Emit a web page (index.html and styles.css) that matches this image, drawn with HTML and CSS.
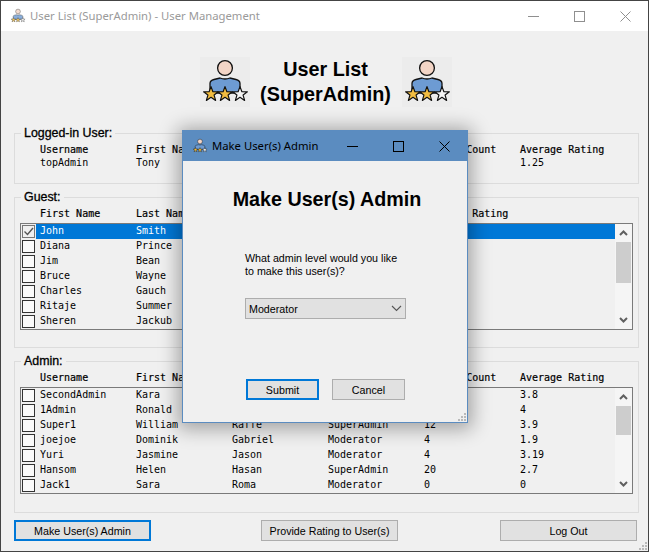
FILE: index.html
```html
<!DOCTYPE html>
<html lang="en">
<head>
<meta charset="utf-8">
<title>User List (SuperAdmin) - User Management</title>
<link rel="stylesheet" href="styles.css">
</head>
<body>
<svg class="defs" width="0" height="0" aria-hidden="true">
  <defs>
    <symbol id="star" viewBox="-8 -8 16 16">
      <polygon points="0,-7.4 1.9,-2.3 7.4,-2.2 3.1,1.1 4.6,6.4 0,3.3 -4.6,6.4 -3.1,1.1 -7.4,-2.2 -1.9,-2.3" stroke="#111" stroke-width="1.2" stroke-linejoin="round"/>
    </symbol>
    <symbol id="user" viewBox="0 0 50 50">
      <circle cx="25" cy="11" r="7.4" fill="#f3d5c6" stroke="#111" stroke-width="1.3"/>
      <path d="M10 36V26.5Q10 23.5 14 22.5L20 21Q25 23 30 21L36 22.5Q40 23.5 40 26.5V36Z" fill="#6d9bd3" stroke="#111" stroke-width="1.3"/>
      <use href="#star" x="3" y="29" width="16" height="16" fill="#f2bd41"/>
      <use href="#star" x="17" y="29" width="16" height="16" fill="#f2bd41"/>
      <use href="#star" x="32" y="29" width="16" height="16" fill="#f4f4f4"/>
    </symbol>
    <symbol id="chev-up" viewBox="0 0 9 6"><path d="M1 5L4.5 1.5L8 5" fill="none" stroke="#606060" stroke-width="2"/></symbol>
    <symbol id="chev-down" viewBox="0 0 9 6"><path d="M1 1L4.5 4.5L8 1" fill="none" stroke="#606060" stroke-width="2"/></symbol>
    <symbol id="grip" viewBox="0 0 9 9"><path d="M6 0h2v2H6zM3 3h2v2H3zM6 3h2v2H6zM0 6h2v2H0zM3 6h2v2H3zM6 6h2v2H6z" fill="#b9b9b9"/></symbol>
  </defs>
</svg>

<div class="window">
  <header class="titlebar">
    <svg class="title-icon title-icon-inactive"><use href="#user"/></svg>
    <span class="title-text">User List (SuperAdmin) - User Management</span>
    <div class="caption caption-inactive">
      <span class="cap-btn"><svg width="11" height="11" viewBox="0 0 11 11"><path d="M0 5.5H11" stroke="currentColor"/></svg></span>
      <span class="cap-btn"><svg width="11" height="11" viewBox="0 0 11 11"><rect x=".5" y=".5" width="10" height="10" fill="none" stroke="currentColor"/></svg></span>
      <span class="cap-btn"><svg width="11" height="11" viewBox="0 0 11 11"><path d="M.5 .5L10.5 10.5M10.5 .5L.5 10.5" stroke="currentColor"/></svg></span>
    </div>
  </header>

  <main class="content">
    <section class="hero">
      <svg class="hero-icon"><use href="#user"/></svg>
      <h1 class="hero-title">User List (SuperAdmin)</h1>
      <svg class="hero-icon"><use href="#user"/></svg>
    </section>

    <fieldset class="group group-logged">
      <legend>Logged-in User:</legend>
      <div class="cols head indent"><span>Username</span><span>First Name</span><span>Last Name</span><span>Admin Level</span><span>Rating Count</span><span>Average Rating</span></div>
      <div class="cols data indent"><span>topAdmin</span><span>Tony</span><span>Stark</span><span>SuperAdmin</span><span>8</span><span>1.25</span></div>
    </fieldset>

    <fieldset class="group group-list group-guest">
      <legend>Guest:</legend>
      <div class="cols head indent"><span>First Name</span><span>Last Name</span><span>Email</span><span>Username</span><span>Average Rating</span></div>
      <div class="listbox">
        <div class="rows">
          <div class="row selected"><span class="check checked"><svg width="11" height="11" viewBox="0 0 11 11"><path d="M1.5 5.5L4.5 8.5L10 2" fill="none" stroke="#555" stroke-width="1.4"/></svg></span><div class="cols cells"><span>John</span><span>Smith</span></div></div>
          <div class="row"><span class="check"></span><div class="cols cells"><span>Diana</span><span>Prince</span></div></div>
          <div class="row"><span class="check"></span><div class="cols cells"><span>Jim</span><span>Bean</span></div></div>
          <div class="row"><span class="check"></span><div class="cols cells"><span>Bruce</span><span>Wayne</span></div></div>
          <div class="row"><span class="check"></span><div class="cols cells"><span>Charles</span><span>Gauch</span></div></div>
          <div class="row"><span class="check"></span><div class="cols cells"><span>Ritaje</span><span>Summer</span></div></div>
          <div class="row"><span class="check"></span><div class="cols cells"><span>Sheren</span><span>Jackub</span></div></div>
        </div>
        <div class="scrollbar">
          <svg class="chev"><use href="#chev-up"/></svg>
          <div class="track"><div class="thumb thumb-guest"></div></div>
          <svg class="chev"><use href="#chev-down"/></svg>
        </div>
      </div>
    </fieldset>

    <fieldset class="group group-list">
      <legend>Admin:</legend>
      <div class="cols head indent"><span>Username</span><span>First Name</span><span>Last Name</span><span>Admin Level</span><span>Rating Count</span><span>Average Rating</span></div>
      <div class="listbox">
        <div class="rows">
          <div class="row"><span class="check"></span><div class="cols cells"><span>SecondAdmin</span><span>Kara</span><span>Danvers</span><span>Moderator</span><span>5</span><span>3.8</span></div></div>
          <div class="row"><span class="check"></span><div class="cols cells"><span>1Admin</span><span>Ronald</span><span>Reed</span><span>Moderator</span><span>1</span><span>4</span></div></div>
          <div class="row"><span class="check"></span><div class="cols cells"><span>Super1</span><span>William</span><span>Raffe</span><span>SuperAdmin</span><span>12</span><span>3.9</span></div></div>
          <div class="row"><span class="check"></span><div class="cols cells"><span>joejoe</span><span>Dominik</span><span>Gabriel</span><span>Moderator</span><span>4</span><span>1.9</span></div></div>
          <div class="row"><span class="check"></span><div class="cols cells"><span>Yuri</span><span>Jasmine</span><span>Jason</span><span>Moderator</span><span>4</span><span>3.19</span></div></div>
          <div class="row"><span class="check"></span><div class="cols cells"><span>Hansom</span><span>Helen</span><span>Hasan</span><span>SuperAdmin</span><span>20</span><span>2.7</span></div></div>
          <div class="row"><span class="check"></span><div class="cols cells"><span>Jack1</span><span>Sara</span><span>Roma</span><span>Moderator</span><span>0</span><span>0</span></div></div>
        </div>
        <div class="scrollbar">
          <svg class="chev"><use href="#chev-up"/></svg>
          <div class="track"><div class="thumb thumb-admin"></div></div>
          <svg class="chev"><use href="#chev-down"/></svg>
        </div>
      </div>
    </fieldset>

    <div class="actions">
      <button class="btn btn-main btn-focus" type="button">Make User(s) Admin</button>
      <button class="btn btn-main" type="button">Provide Rating to User(s)</button>
      <button class="btn btn-main" type="button">Log Out</button>
    </div>
  </main>
  <svg class="grip"><use href="#grip"/></svg>
</div>

<div class="dialog" role="dialog">
  <header class="dialog-bar">
    <svg class="title-icon"><use href="#user"/></svg>
    <span class="dialog-title">Make User(s) Admin</span>
    <div class="caption">
      <span class="cap-btn"><svg width="11" height="11" viewBox="0 0 11 11"><path d="M0 5.5H11" stroke="currentColor"/></svg></span>
      <span class="cap-btn"><svg width="11" height="11" viewBox="0 0 11 11"><rect x=".5" y=".5" width="10" height="10" fill="none" stroke="currentColor"/></svg></span>
      <span class="cap-btn"><svg width="11" height="11" viewBox="0 0 11 11"><path d="M.5 .5L10.5 10.5M10.5 .5L.5 10.5" stroke="currentColor"/></svg></span>
    </div>
  </header>
  <div class="dialog-body">
    <h2 class="dialog-heading">Make User(s) Admin</h2>
    <p class="dialog-text">What admin level would you like<br>to make this user(s)?</p>
    <div class="select"><span>Moderator</span><svg class="select-chev" width="11" height="7" viewBox="0 0 11 7"><path d="M1 1L5.5 5.5L10 1" fill="none" stroke="#555" stroke-width="1.1"/></svg></div>
    <div class="dialog-actions">
      <button class="btn btn-dialog btn-focus" type="button">Submit</button>
      <button class="btn btn-dialog" type="button">Cancel</button>
    </div>
  </div>
  <svg class="grip"><use href="#grip"/></svg>
</div>
</body>
</html>
```

FILE: styles.css
```css
* { box-sizing: border-box; }
html, body { margin: 0; padding: 0; }
body {
  width: 649px;
  height: 552px;
  overflow: hidden;
  position: relative;
  background: #444;
  font-family: "Liberation Sans", Arial, sans-serif;
  color: #000;
}
.defs { position: absolute; }

.window {
  position: relative;
  width: 647px;
  height: 550px;
  margin-left: 1px;
  margin-top: 1px;
  background: #f0f0f0;
  display: flex;
  flex-direction: column;
}

.titlebar {
  height: 30px;
  flex: none;
  background: #fff;
  display: flex;
  align-items: center;
  padding-left: 9px;
}
.title-icon { width: 16px; height: 16px; flex: none; }
.title-icon-inactive { opacity: 0.8; }
.title-text {
  margin-left: 4px;
  font: 11.3px/16px "Noto Sans", "Open Sans", sans-serif;
  color: #9a9a9a;
  flex: 1;
}
.caption { display: flex; flex: none; color: #000; }
.caption-inactive { color: #8f8f8f; }
.cap-btn {
  width: 46px;
  height: 30px;
  display: flex;
  align-items: center;
  justify-content: center;
}

.content {
  flex: 1;
  display: flex;
  flex-direction: column;
  padding: 0 9px 0 13px;
}

.hero {
  height: 95px;
  flex: none;
  display: flex;
  justify-content: center;
  padding-top: 26px;
  padding-right: 2px;
}
.hero-icon { width: 50px; height: 50px; flex: none; background: #ececec; }
.hero-title {
  width: 152px;
  margin: 0;
  font-size: 19.8px;
  line-height: 25px;
  font-weight: 700;
  text-align: center;
}

.group {
  margin: 0;
  padding: 0 5px 0 5px;
  border: 1px solid #dcdcdc;
  min-width: 0;
}
.group legend {
  margin-left: 1px;
  padding: 0 3px 0 3px;
  font-size: 12.4px;
  line-height: 15px;
  -webkit-text-stroke: 0.3px #000;
}
.group-logged { height: 58px; margin-bottom: 6px; }
.group-list { height: 159px; margin-bottom: 6px; }
.group-guest { height: 158px; }

.cols {
  display: grid;
  grid-template-columns: repeat(6, 96px);
  font-family: "DejaVu Sans Mono", "Liberation Mono", monospace;
  font-size: 10px;
  white-space: nowrap;
}
.indent { padding-left: 20px; }
.head { line-height: 13px; margin-top: 2px; -webkit-text-stroke: 0.2px #000; }
.data { line-height: 13px; }
.group-list .head { margin-bottom: 3px; }

.listbox {
  height: 107px;
  border: 1px solid #7a7a7a;
  display: flex;
  background: #f0f0f0;
}
.rows { flex: 1; min-width: 0; }
.row {
  height: 15px;
  display: flex;
  align-items: center;
  padding-left: 1px;
}
.check {
  width: 13px;
  height: 13px;
  flex: none;
  border: 1px solid #333;
  background: #fafafa;
  display: flex;
  align-items: center;
  justify-content: center;
}
.check.checked { border-color: #777; background: #f0f0f0; }
.cells {
  flex: 1;
  height: 15px;
  line-height: 14px;
  margin-left: 1px;
  padding-left: 4px;
  overflow: hidden;
}
.selected .cells { background: #0078d7; color: #fff; }

.scrollbar {
  width: 17px;
  flex: none;
  background: #f5f5f5;
  display: flex;
  flex-direction: column;
}
.chev { width: 9px; height: 6px; margin: 6px 4px; flex: none; }
.track { flex: 1; }
.thumb { background: #cdcdcd; width: 15px; margin-left: 1px; }
.thumb-guest { height: 41px; }
.thumb-admin { height: 29px; }

.actions {
  display: flex;
  margin-top: 1px;
}
.actions .btn + .btn { margin-left: 110px; }
.actions .btn + .btn + .btn { margin-left: 102px; }
.btn {
  height: 21px;
  padding: 0;
  border: 1px solid #adadad;
  background: #e1e1e1;
  font-family: "Liberation Sans", Arial, sans-serif;
  font-size: 10.7px;
  color: #000;
}
.btn-main { width: 137px; }
.btn-focus { border: 2px solid #0078d7; }

.grip { position: absolute; right: 0; bottom: 0; width: 9px; height: 9px; }

.dialog {
  position: absolute;
  left: 182px;
  top: 130px;
  width: 286px;
  height: 293px;
  background: #f0f0f0;
  border: 1px solid #5b8cc0;
  box-shadow: 0 2px 18px 4px rgba(0, 0, 0, 0.33);
  display: flex;
  flex-direction: column;
}
.dialog-bar {
  height: 30px;
  flex: none;
  background: #5b8cc0;
  display: flex;
  align-items: center;
  padding-left: 9px;
}
.dialog-title {
  margin-left: 4px;
  flex: 1;
  font: 11.3px/16px "Noto Sans", "Open Sans", sans-serif;
  color: #000;
}
.dialog-body { flex: 1; padding: 26px 0 0 62px; }
.dialog-heading {
  margin: 0 0 41px -62px;
  width: 288px;
  text-align: center;
  font-size: 19.7px;
  line-height: 24px;
  font-weight: 700;
}
.dialog-text {
  margin: 0 0 20px;
  font-size: 10.7px;
  line-height: 13px;
}
.select {
  width: 161px;
  height: 21px;
  border: 1px solid #adadad;
  background: #e1e1e1;
  font-size: 10.7px;
  display: flex;
  align-items: center;
  justify-content: space-between;
  padding: 0 3px;
}
.dialog-actions {
  display: flex;
  gap: 13px;
  margin: 60px 0 0 1px;
}
.btn-dialog { width: 73px; }
```
